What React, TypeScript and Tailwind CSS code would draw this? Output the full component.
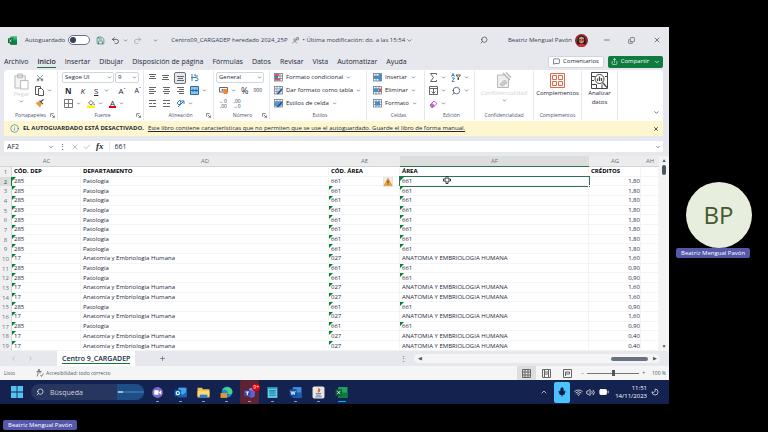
import type { ReactNode } from 'react';
import clsx from 'clsx';
import {
  ArrowDownToLine, Battery, ChevronDown, ChevronLeft, ChevronRight, ChevronUp, Copy as Restore,
  Info, MessageSquare, Mic, Minus, Moon, Plus, Redo2, Save, Scissors, Search, Share, Undo2, Volume2, Wifi, X, Check,
} from 'lucide-react';

const COLUMNS = ['AC', 'AD', 'AE', 'AF', 'AG', 'AH'];
const TABS = ['Archivo', 'Inicio', 'Insertar', 'Dibujar', 'Disposición de página', 'Fórmulas', 'Datos', 'Revisar', 'Vista', 'Automatizar', 'Ayuda'];

type Row = { dep: string; name: string; code: string; area: string; credits: string };

const pat = (credits: string): Row => ({ dep: '285', name: 'Patología', code: '661', area: '661', credits });
const ana = (credits: string): Row => ({
  dep: '17', name: 'Anatomía y Embriología Humana', code: '027', area: 'ANATOMIA Y EMBRIOLOGIA HUMANA', credits,
});

const ROWS: Row[] = [
  pat('1,80'), pat('1,80'), pat('1,80'), pat('1,80'), pat('1,80'), pat('1,80'), pat('1,80'), pat('1,80'),
  ana('1,60'), pat('0,90'), pat('0,90'), ana('1,60'), ana('1,60'), pat('0,90'), ana('1,60'), pat('0,90'),
  ana('0,40'), ana('0,40'),
];

function Caret() {
  return <ChevronDown className="w-[5px] h-[5px] shrink-0 text-gray-600" strokeWidth={3} />;
}

function Group({ label, className, launcher, children }: { label: string; className: string; launcher?: boolean; children: ReactNode }) {
  return (
    <section aria-label={label || 'Análisis'} className={clsx('flex flex-col shrink-0 border-r border-gray-200 my-px', className)}>
      <div className="flex-1">{children}</div>
      <div className="relative h-[9px] leading-[9px] text-[5px] text-center text-gray-600">
        {label}
        {launcher && (
          <svg viewBox="0 0 8 8" className="absolute right-[2px] top-[2px] w-[5px] h-[5px]" fill="none" stroke="#444">
            <path d="M1 6V1h5M3 3l4 4M7 4v3H4" />
          </svg>
        )}
      </div>
    </section>
  );
}

function Line({ className, children }: { className?: string; children: ReactNode }) {
  return <div className={clsx('flex items-center h-[13px]', className)}>{children}</div>;
}

function Tool({ label, children, caret, className }: { label: string; children: ReactNode; caret?: boolean; className?: string }) {
  return (
    <button type="button" aria-label={label} className={clsx('flex items-center gap-[3px] shrink-0', className)}>
      {children}
      {caret && <Caret />}
    </button>
  );
}

function Bars({ d, color = '#666' }: { d: string; color?: string }) {
  return (
    <svg viewBox="0 0 9 9" className="w-[9px] h-[9px]" fill="none" stroke={color}>
      <path d={d} />
    </svg>
  );
}

function GridIcon({ accent, kind }: { accent: string; kind: 'cond' | 'table' | 'style' | 'insert' | 'delete' | 'format' }) {
  return (
    <svg viewBox="0 0 18 18" className="w-[9px] h-[9px]" fill="none" strokeWidth="1.5">
      <rect x="1" y="1" width="16" height="15" fill="#fff" stroke="#6b7280" />
      <path d="M1 6h16M1 11h16M6 1v15M12 1v15" stroke="#6b7280" />
      {kind === 'cond' && <><path d="M2 2h8v4H2zM2 11h10v4H2z" fill="#e8505b" /><path d="M2 6h6v5H2z" fill="#2f7fc1" /></>}
      {kind === 'table' && <path d="M6 6h11v5H6z" fill={accent} />}
      {kind === 'style' && <path d="M2 5h13v9H2z" fill={accent} />}
      {kind === 'insert' && <path d="M1 6h11v5H1zM12 2h5v14h-5z" fill={accent} />}
      {kind === 'delete' && <><path d="M1 5h9v7H1z" fill={accent} /><path d="M11 5l6 7m0-7l-6 7" stroke="#d13438" strokeWidth="2" /></>}
      {kind === 'format' && <path d="M4 5h10v8H4z" fill={accent} />}
      {(kind === 'table' || kind === 'style') && <path d="M7 16l9-10" stroke="#1d4f91" strokeWidth="3" />}
    </svg>
  );
}

function ExcelLogo({ className }: { className: string }) {
  return (
    <svg viewBox="0 0 24 24" className={className}>
      <rect x="6" y="1" width="18" height="22" rx="2" fill="#21a366" />
      <path d="M15 1h7a2 2 0 012 2v4h-9z" fill="#33c481" />
      <path d="M6 12h18v9a2 2 0 01-2 2H8a2 2 0 01-2-2z" fill="#107c41" />
      <rect y="6" width="13" height="13" rx="1.5" fill="#0b6a37" />
      <path d="M3.500 9l6 7.500M9.500 9l-6 7.500" stroke="#fff" strokeWidth="1.800" />
    </svg>
  );
}

function TitleBar() {
  return (
    <header className="flex items-center h-[26px] px-2 text-gray-700">
      <ExcelLogo className="w-[9px] h-[9px]" />
      <label className="flex items-center gap-[3px] ml-2">
        Autoguardado
        <span className="relative flex items-center">
          <input type="checkbox" className="appearance-none w-[22px] h-[10px] rounded-full border border-gray-500 bg-white" />
          <span className="absolute left-[2px] w-[6px] h-[6px] rounded-full bg-gray-700" />
        </span>
      </label>
      <Tool label="Guardar" className="ml-[6px]"><Save className="w-[9px] h-[9px] text-emerald-800" strokeWidth={1.5} /></Tool>
      <Tool label="Deshacer" caret className="ml-[6px]"><Undo2 className="w-[9px] h-[9px]" /></Tool>
      <Tool label="Rehacer" className="ml-[5px] text-gray-400"><Redo2 className="w-[9px] h-[9px]" /></Tool>
      <Tool label="Personalizar" className="ml-[11px]"><Caret /></Tool>
      <h1 className="flex items-center ml-[13px] whitespace-nowrap">
        Centro09_CARGADEP heredado 2024_25P
        <svg viewBox="0 0 12 12" className="w-[7px] h-[7px] mx-1" fill="none" stroke="#555"><circle cx="5" cy="5" r="2" /><path d="M1 11c1-4 6-4 7 0M8 1h3v4H8z" /></svg>
        • Última modificación: do. a las 15:54
        <ChevronDown className="w-[7px] h-[7px] ml-px" />
      </h1>
      <Tool label="Buscar" className="ml-auto"><Search className="w-2 h-2 -scale-x-100" /></Tool>
      <span className="ml-5 whitespace-nowrap">Beatriz Mengual Pavón</span>
      <svg viewBox="0 0 24 24" className="w-[13px] h-[13px] ml-[3px]">
        <circle cx="12" cy="12" r="12" fill="#8b2a2e" />
        <path d="M5 20C3 10 6 3 12 3s9 7 7 17z" fill="#2b1718" />
        <ellipse cx="12" cy="11" rx="5" ry="6" fill="#d9977c" />
        <path d="M7 10h4v3H7zM13 10h4v3h-4z" fill="none" stroke="#3a1717" />
        <path d="M4 21c2-4 14-4 16 0-4 4-12 4-16 0z" fill="#c8323c" />
      </svg>
      <Tool label="Minimizar" className="ml-[15px]"><Minus className="w-2 h-2" /></Tool>
      <Tool label="Restaurar" className="ml-[17px]"><Restore className="w-[7px] h-[7px] -scale-y-100" /></Tool>
      <Tool label="Cerrar" className="ml-[18px]"><X className="w-2 h-2" /></Tool>
    </header>
  );
}

function TabBar() {
  return (
    <nav className="flex items-center h-[17px] pl-1 pr-[6px] text-gray-800">
      <div className="flex gap-[9px] text-[7px]">
        {TABS.map((t) => (
          <a key={t} href="#" className={clsx('whitespace-nowrap leading-[11px]', t === 'Inicio' && 'font-semibold border-b border-[#107c41]')}>{t}</a>
        ))}
      </div>
      <button type="button" className="ml-auto flex items-center justify-center gap-[3px] w-[56px] h-3 rounded-xs border border-gray-300 bg-white whitespace-nowrap">
        <MessageSquare className="w-[7px] h-[7px]" />Comentarios
      </button>
      <button type="button" className="ml-1 flex items-center justify-center gap-[3px] w-[55px] h-3 rounded-xs bg-[#0f7b3f] text-white">
        <Share className="w-[7px] h-[7px]" />Compartir<ChevronDown className="w-[6px] h-[6px] ml-[2px]" strokeWidth={3} />
      </button>
    </nav>
  );
}

function Ribbon() {
  return (
    <div className="flex h-[51px] ml-1 mr-[6px] bg-white rounded-t text-gray-800">
      <Group label="Portapapeles" launcher className="w-[54px]">
        <div className="flex">
          <button type="button" className="flex flex-col items-center w-[31px] pt-[2px] pl-[4px] text-gray-300">
            <svg viewBox="0 0 16 18" className="w-[15px] h-[17px]" fill="#f3f3f3" stroke="#b5b5b5">
              <path d="M1 3h11v13H1zM4 1h5v4H4z" /><path d="M7 8h8v9H7z" fill="#fff" />
            </svg>
            Pegar
            <Caret />
          </button>
          <div>
            <Line><Tool label="Cortar" className="ml-px"><Scissors className="w-2 h-2 -rotate-90" strokeWidth={1.5} /></Tool></Line>
            <Line><Tool label="Copiar" caret>
              <svg viewBox="0 0 9 10" className="w-[9px] h-[10px]" fill="#fff" stroke="#555"><path d="M.5.5h5v8h-5z" /><path d="M3.500 2.500h3l2 2v5h-5z" /></svg>
            </Tool></Line>
            <Line><Tool label="Copiar formato">
              <svg viewBox="0 0 16 16" className="w-[9px] h-[9px]"><path d="M1 7l8 8 3-6-5-5z" fill="#f0973b" /><path d="M8 3l6 6M10 5l5-4" stroke="#444" strokeWidth="2" /></svg>
            </Tool></Line>
          </div>
        </div>
      </Group>

      <Group label="Fuente" launcher className="w-[86px] pl-1">
        <Line>
          <span className="relative flex items-center">
            <select aria-label="Fuente" className="appearance-none w-[52px] h-[11px] pl-[2px] border border-gray-300 rounded-xs"><option>Segoe UI</option></select>
            <span className="absolute right-[2px]"><Caret /></span>
          </span>
          <span className="relative flex items-center ml-px">
            <select aria-label="Tamaño de fuente" className="appearance-none w-[24px] h-[11px] pl-[2px] border border-gray-300 rounded-xs"><option>9</option></select>
            <span className="absolute right-[2px]"><Caret /></span>
          </span>
        </Line>
        <Line className="gap-[9px] pl-[3px] text-[8px]">
          <button type="button" className="font-bold">N</button>
          <button type="button" className="italic">K</button>
          <Tool label="Subrayado" caret><span className="underline mr-[3px]">S</span></Tool>
          <Tool label="Aumentar fuente"><span>A<sup className="text-[5px]">ˆ</sup></span></Tool>
          <Tool label="Reducir fuente"><span className="text-[7px]">A<sup className="text-[5px]">ˇ</sup></span></Tool>
        </Line>
        <Line className="gap-[6px] pl-[2px]">
          <Tool label="Bordes" caret><Bars d="M.5.5h8v8h-8zM.5 4.500h8M4.500.5v8" color="#777" /></Tool>
          <Tool label="Color de relleno" caret>
            <svg viewBox="0 0 16 18" className="w-2 h-[9px]"><path d="M3 8l5-5 5 5-5 4z" fill="#fff" stroke="#444" strokeWidth="1.500" /><path d="M14 8l2 4h-3z" fill="#2f7fc1" /><path d="M0 13h16v5H0z" fill="#fff200" /></svg>
          </Tool>
          <Tool label="Color de fuente" caret><span className="text-[8px] leading-[8px] h-[9px] px-px border-b-2 border-red-600">A</span></Tool>
        </Line>
      </Group>

      <Group label="Alineación" launcher className="w-[70px] pl-[4px]">
        <Line className="gap-[4px]">
          <Tool label="Alinear arriba"><Bars d="M1 1.500h7M2 3.500h5M1 5.500h7" /></Tool>
          <Tool label="Alinear en medio"><Bars d="M1 2.500h7M2 4.500h5M1 6.500h7" /></Tool>
          <Tool label="Alinear abajo" className="w-[12px] h-[12px] justify-center border border-gray-500 rounded-xs bg-gray-200"><Bars d="M1 3.500h7M2 5.500h5M1 7.500h7" /></Tool>
          <Tool label="Ajustar texto"><Bars d="M2 1v7M5 1v2M1 4.500h5q2 0 2 2t-3 1M5 3l3 0" color="#3a7ab5" /></Tool>
        </Line>
        <Line className="gap-[5px]">
          <Tool label="Izquierda"><Bars d="M1 1.500h7M1 3.500h5M1 5.500h7M1 7.500h5" /></Tool>
          <Tool label="Centrar"><Bars d="M1 1.500h7M2 3.500h5M1 5.500h7M2 7.500h5" /></Tool>
          <Tool label="Derecha"><Bars d="M1 1.500h7M3 3.500h5M1 5.500h7M3 7.500h5" /></Tool>
          <Tool label="Combinar" caret>
            <svg viewBox="0 0 9 9" className="w-[9px] h-[9px]" fill="#8cc4ee" stroke="#2c6ca5"><path d="M.5.5h8v8h-8z" /><path d="M1 4.500h7M3 3v3M6 3v3" /></svg>
          </Tool>
        </Line>
        <Line className="gap-[5px]">
          <Tool label="Reducir sangría"><Bars d="M1 1.500h7M5 4.500h3M1 7.500h7M4 4.500H1" /></Tool>
          <Tool label="Aumentar sangría"><Bars d="M1 1.500h7M5 4.500h3M1 7.500h7M1 4.500h3" /></Tool>
          <Tool label="Orientación" caret><Bars d="M2 8L8 2M8 5V2H5M1 4l3-3 1 3-2 2z" color="#3a7ab5" /></Tool>
        </Line>
      </Group>

      <Group label="Número" launcher className="w-[56px] pl-[2px]">
        <Line>
          <span className="relative flex items-center">
            <select aria-label="Formato de número" className="appearance-none w-[48px] h-[11px] pl-[2px] border border-gray-300 rounded-xs"><option>General</option></select>
            <span className="absolute right-[2px]"><Caret /></span>
          </span>
        </Line>
        <Line className="gap-[5px] pl-[3px]">
          <Tool label="Moneda" caret>
            <svg viewBox="0 0 18 14" className="w-[9px] h-[7px]"><path d="M1 1h16v9H1z" fill="#fff" stroke="#666" strokeWidth="2" /><path d="M9 4h8v10H9z" fill="#ef8b2c" /><circle cx="7" cy="6" r="2" fill="#666" /></svg>
          </Tool>
          <button type="button" className="text-[9px]">%</button>
          <button type="button" className="text-[5px]">000</button>
        </Line>
        <Line className="gap-[6px] pl-[3px] text-[5px] leading-[5px] text-gray-700">
          <button type="button" className="text-right"><span className="text-sky-700">←</span>0<br />,00</button>
          <button type="button" className="text-right">,00<br /><span className="text-sky-700">→</span>0</button>
        </Line>
      </Group>

      <Group label="Estilos" className="w-[97px] pl-[4px]">
        <Line><Tool label="Formato condicional" caret><GridIcon accent="#e8505b" kind="cond" />Formato condicional</Tool></Line>
        <Line><Tool label="Dar formato como tabla" caret><GridIcon accent="#a9d4f5" kind="table" />Dar formato como tabla</Tool></Line>
        <Line><Tool label="Estilos de celda" caret><GridIcon accent="#4a9ad8" kind="style" />Estilos de celda</Tool></Line>
      </Group>

      <Group label="Celdas" className="w-[58px] pl-[6px]">
        <Line><Tool label="Insertar celdas"><GridIcon accent="#3d8fd1" kind="insert" />Insertar</Tool><span className="ml-auto mr-[8px]"><Caret /></span></Line>
        <Line><Tool label="Eliminar celdas"><GridIcon accent="#3d8fd1" kind="delete" />Eliminar</Tool><span className="ml-auto mr-[8px]"><Caret /></span></Line>
        <Line><Tool label="Formato de celdas" caret><GridIcon accent="#3d8fd1" kind="format" />Formato</Tool></Line>
      </Group>

      <Group label="Edición" className="w-[50px] pl-[4px]">
        <Line className="gap-[5px]">
          <Tool label="Suma" caret><Bars d="M7.500 2V.5h-6l3 4-3 4h6V7" /></Tool>
          <Tool label="Ordenar y filtrar" caret>
            <svg viewBox="0 0 20 18" className="w-[10px] h-[9px]" fill="none" strokeWidth="1.800"><path d="M1 7l3-6 3 6M2 5h4M2 10h5l-5 7h5" stroke="#2f7fc1" /><path d="M10 4h9l-4 5v5l-1-1V9z" stroke="#444" /></svg>
          </Tool>
        </Line>
        <Line className="gap-[5px]">
          <Tool label="Rellenar" caret><Bars d="M.5.5h8v8h-8zM.5 2.500h8M4.500 3v4M2.500 5.500l2 2 2-2" /></Tool>
          <Tool label="Buscar y seleccionar" caret><Search className="w-[10px] h-[10px] -scale-x-100" strokeWidth={1.5} /></Tool>
        </Line>
        <Line>
          <Tool label="Borrar" caret>
            <svg viewBox="0 0 18 16" className="w-[9px] h-2" strokeWidth="1.600"><path d="M2 10l8-8 6 5-8 8H5z" fill="#fff" stroke="#a33bb5" /><path d="M2 10l4-4 6 5-4 4H5z" fill="#c65fd3" /></svg>
          </Tool>
        </Line>
      </Group>

      <Group label="Confidencialidad" className="w-[59px]">
        <button type="button" disabled className="flex flex-col items-center w-full pt-px text-gray-300">
          <svg viewBox="0 0 32 34" className="w-4 h-[17px]" fill="none" stroke="#b8b8b8" strokeWidth="2">
            <path d="M3 6h14l8 8v17H3z" fill="#eee" /><path d="M8 25l9-9 5 5-9 7z" fill="#ccc" /><path d="M14 2l14 14M20 1l10 10" strokeWidth="3" />
          </svg>
          Confidencialidad
          <Caret />
        </button>
      </Group>

      <Group label="Complementos" className="w-[48px]">
        <button type="button" className="flex flex-col items-center w-full pt-[2px] gap-px">
          <svg viewBox="0 0 15 15" className="w-[15px] h-[15px]" fill="#fff" stroke="#e0694a">
            <path d="M.5.5h14v14H.5z" /><path d="M2.500 2.500h4v4h-4zM8.500 2.500h4v4h-4zM2.500 8.500h4v4h-4zM8.500 8.500h4v4h-4z" />
          </svg>
          Complementos
        </button>
      </Group>

      <Group label="" className="w-[36px]">
        <button type="button" className="flex flex-col items-center w-full pt-px">
          <svg viewBox="0 0 34 34" className="w-[17px] h-[17px]" fill="none" stroke="#444" strokeWidth="2">
            <path d="M1 1h32v32H1zM1 9h8M1 17h5M1 25h10M28 9h5M11 25v8M22 25v8" />
            <circle cx="17" cy="14" r="9" fill="#fff" /><path d="M13 18v-5M17 18V9M21 18v-6M23 21l9 10" strokeWidth="2.500" />
          </svg>
          <span>Analizar<br />datos</span>
        </button>
      </Group>
      <Tool label="Contraer la cinta" className="ml-auto mr-[3px] mt-auto mb-[5px]"><ChevronDown className="w-[7px] h-[7px]" /></Tool>
    </div>
  );
}

function Mark() {
  return <span className="absolute left-0 top-0 border-t-[4px] border-r-[4px] border-t-green-700 border-r-transparent" />;
}

const cell = 'relative p-0 pl-[2px] border-r border-b border-gray-100 whitespace-nowrap';

function Sheet() {
  return (
    <div className="flex h-[195px] bg-white">
      <table className="flex-1 h-full table-fixed border-separate border-spacing-0 leading-[8px] text-gray-800">
        <colgroup>
          <col className="w-[12px]" />
          <col className="w-[69px]" />
          <col />
          <col className="w-[71px]" />
          <col className="w-[189px]" />
          <col className="w-[52px]" />
          <col className="w-[18px]" />
        </colgroup>
        <thead>
          <tr className="h-[11px] bg-[#ececec] text-gray-500">
            <th className="p-0 border-b border-gray-300" />
            {COLUMNS.map((c) => (
              <th
                key={c}
                scope="col"
                className={clsx('p-0 font-normal border-b overflow-hidden', c === 'AF' ? 'bg-[#dcdedd] border-[#2f6f55]' : 'border-gray-300')}
              >
                {c}
              </th>
            ))}
          </tr>
        </thead>
        <tbody>
          <tr className="font-bold text-black">
            <th scope="row" className="p-0 font-normal text-gray-500 bg-[#f0f0f0] border-r border-gray-300">1</th>
            <td className={cell}>CÓD. DEP</td>
            <td className={cell}>DEPARTAMENTO</td>
            <td className={cell}>CÓD. ÁREA</td>
            <td className={cell}>ÁREA</td>
            <td className={cell}>CRÉDITOS</td>
            <td className={cell} />
          </tr>
          {ROWS.map((r, i) => (
            <tr key={i}>
              <th scope="row" className={clsx('p-0 font-normal border-r', i === 0 ? 'bg-[#dcdedd] text-green-800 border-green-700' : 'bg-[#f0f0f0] text-gray-500 border-gray-300')}>{i + 2}</th>
              <td className={cell}><Mark />{r.dep}</td>
              <td className={cell}>{r.name}</td>
              <td className={cell}>
                {i > 0 && <Mark />}
                {r.code}
                {i === 0 && (
                  <svg viewBox="0 0 20 20" className="absolute right-[6px] top-0 w-[10px] h-[10px]">
                    <path d="M.5.5h19v19H.5z" fill="#f7efe4" stroke="#cfcfcf" />
                    <path d="M10 2l8 15H2z" fill="#f0a33a" stroke="#d98a20" /><path d="M10 7v5M10 13v2" stroke="#333" strokeWidth="2" />
                  </svg>
                )}
              </td>
              <td className={clsx(cell, i === 0 && 'outline outline-[#2f6f55]')}>
                {r.area === '661' && <Mark />}
                {r.area}
                {i === 0 && (
                  <svg viewBox="0 0 16 16" className="absolute left-[43px] -top-px w-2 h-2" fill="#fff" stroke="#333" strokeWidth="2">
                    <path d="M6 1h4v5h5v4h-5v5H6v-5H1V6h5z" />
                  </svg>
                )}
              </td>
              <td className={clsx(cell, 'text-right')}>{r.credits}</td>
              <td className={cell} />
            </tr>
          ))}
        </tbody>
      </table>
      <div className="flex flex-col items-center w-[10px] bg-[#f3f3f3] pt-px pb-px text-[5px] leading-[7px] text-gray-600">
        <span>▲</span>
        <span className="w-1 h-[10px] mt-px rounded-full bg-gray-600" />
        <span className="mt-auto">▼</span>
      </div>
    </div>
  );
}

function StatusBar() {
  return (
    <footer className="flex items-center h-[14px] pl-1 pr-[3px] bg-[#f5f5f6] text-[5px] text-gray-600">
      <span>Listo</span>
      <button type="button" className="flex items-center gap-[2px] ml-[21px]">
        <svg viewBox="0 0 16 16" className="w-2 h-2" fill="none" stroke="#555" strokeWidth="1.500"><circle cx="6" cy="2" r="1.500" /><path d="M1 5h10M4 5v5l-2 5M8 5v4M9 12l2 3 4-6" /></svg>
        Accesibilidad: todo correcto
      </button>
      <div className="flex items-center ml-auto h-full">
        <Tool label="Normal" className="w-[19px] h-full justify-center bg-[#dedede]"><Bars d="M.5.5h8v8h-8zM.5 3h8M.5 6h8M3 .5v8M6 .5v8" /></Tool>
        <Tool label="Diseño de página" className="w-[21px] justify-center"><Bars d="M.5.5h8v8h-8zM2.500 1v7M6.500 1v7M3 3h3M3 5h3" /></Tool>
        <Tool label="Salto de página" className="w-[21px] justify-center"><Bars d="M.5.5h8v8h-8zM2.500 7V3h4v2h-4" /></Tool>
      </div>
      <span className="ml-[3px]">−</span>
      <input
        type="range"
        aria-label="Zoom"
        defaultValue={50}
        className="appearance-none w-[52px] h-[6px] mx-[3px] bg-[linear-gradient(#777,#777)] bg-[length:100%_1px] bg-center bg-no-repeat [&::-webkit-slider-thumb]:appearance-none [&::-webkit-slider-thumb]:w-[3px] [&::-webkit-slider-thumb]:h-[6px] [&::-webkit-slider-thumb]:bg-gray-600"
      />
      <span>+</span>
      <span className="ml-[7px]">100 %</span>
    </footer>
  );
}

function TaskIcon({ label, children, active }: { label: string; children: ReactNode; active?: boolean }) {
  return (
    <button type="button" aria-label={label} className="flex flex-col items-center justify-end w-[19px] h-full">
      <svg viewBox="0 0 24 24" className="w-[13px] h-[13px]">{children}</svg>
      <span className={clsx('h-px my-[2px] rounded', active ? 'w-2 bg-sky-400' : 'w-[3px] bg-gray-400')} />
    </button>
  );
}

function Taskbar() {
  return (
    <div className="flex items-center h-6 pl-[11px] pr-[10px] bg-[#14224f] text-white">
      <button type="button" aria-label="Inicio">
        <svg viewBox="0 0 12 12" className="w-3 h-3" fill="#55c2f5"><path d="M0 0h5.600v5.600H0zM6.400 0H12v5.600H6.400zM0 6.400h5.600V12H0zM6.400 6.400H12V12H6.400z" /></svg>
      </button>
      <label className="flex items-center w-[113px] h-4 ml-2 pl-[5px] rounded-full bg-[#27365f]">
        <Search className="w-2 h-2 -scale-x-100" />
        <input type="search" placeholder="Búsqueda" className="w-[58px] ml-[6px] text-[7px] placeholder:text-gray-300" aria-label="Búsqueda" />
        <svg viewBox="0 0 27 16" className="w-[27px] h-4 ml-auto rounded-r-full" preserveAspectRatio="none">
          <path d="M0 0h27v16H0z" fill="#1f4d86" /><path d="M0 8h27" stroke="#4d90c4" /><path d="M1 8h5" stroke="#fff" />
        </svg>
      </label>
      <div className="flex gap-[4px] h-full ml-1">
        <TaskIcon label="Chat"><circle cx="12" cy="12" r="10" fill="#7b6cc9" /><path d="M6 8h8v8H6zM15 11l4-3v8l-4-3z" fill="#fff" /></TaskIcon>
        <TaskIcon label="Outlook"><path d="M8 3h15v17H8z" fill="#42a5ea" /><path d="M8 11l8 5 7-5v10H8z" fill="#1565b8" /><path d="M1 7h12v12H1z" fill="#0f5fb5" /><circle cx="7" cy="13" r="3" fill="none" stroke="#fff" strokeWidth="2" /></TaskIcon>
        <TaskIcon label="Explorador"><path d="M1 3h8l2 3h12v15H1z" fill="#f5c04a" /><path d="M1 9h22v10H1z" fill="#fbd975" /><path d="M5 16h14v6H5z" fill="#2c7dc7" /></TaskIcon>
        <TaskIcon label="Edge"><circle cx="13" cy="11" r="10" fill="#1b8ad3" /><path d="M4 8c4-9 19-7 19 3 0 5-8 5-9 2 2-5-6-8-10-5z" fill="#4cd08a" /><path d="M1 13h12v9H1z" fill="#e4952c" /></TaskIcon>
        <div className="relative bg-[#5b2334] rounded-xs">
          <TaskIcon label="Teams"><circle cx="15" cy="7" r="4" fill="#7b83eb" /><path d="M8 9h14v8c0 6-12 6-13 0z" fill="#5b62c9" /><path d="M2 8h12v11H2z" fill="#4248a8" /><path d="M5 11h6M8 11v6" stroke="#fff" strokeWidth="2" /></TaskIcon>
          <span className="absolute -right-px top-[4px] h-[7px] px-px rounded-full bg-red-600 text-[5px] leading-[7px]">9+</span>
        </div>
        <TaskIcon label="Bloc de notas"><path d="M3 2h18v20H3z" fill="#5fd0e8" /><path d="M3 2h18v3H3z" fill="#2b8cab" /><path d="M6 9h12M6 13h12M6 17h12" stroke="#1b6f95" strokeWidth="2" /></TaskIcon>
        <TaskIcon label="Word"><path d="M7 2h16v20H7z" fill="#3f8fe0" /><path d="M7 12h16v10H7z" fill="#1c5bb5" /><path d="M1 6h13v13H1z" fill="#174a9c" /><path d="M3.500 9l2 7 2-6 2 6 2-7" fill="none" stroke="#fff" strokeWidth="1.500" /></TaskIcon>
        <TaskIcon label="Java"><rect x="1" y="1" width="22" height="22" rx="3" fill="#e8e6e2" /><path d="M12 4c3 3-3 4 0 8M15 6c-2 2-2 3-1 5" fill="none" stroke="#d9622b" strokeWidth="2" /><path d="M7 14h10M8 17h8M6 20h12" stroke="#4a6d94" strokeWidth="1.500" /></TaskIcon>
        <TaskIcon label="Excel" active><path d="M6 2h17v20H6z" fill="#21a366" /><path d="M6 12h17v10H6z" fill="#107c41" /><path d="M1 6h12v12H1z" fill="#0b5f31" /><path d="M4 9l6 6M10 9l-6 6" stroke="#fff" strokeWidth="1.500" /></TaskIcon>
      </div>
      <Tool label="Iconos ocultos" className="ml-auto"><ChevronUp className="w-2 h-2" /></Tool>
      <Tool label="Micrófono" className="w-4 h-[21px] ml-[6px] justify-center rounded-xs bg-[#4cc2ff] text-[#10204a]"><Mic className="w-[10px] h-[10px]" fill="#10204a" /></Tool>
      <Wifi className="w-[9px] h-[9px] ml-[4px]" />
      <Volume2 className="w-[9px] h-[9px] ml-[3px]" />
      <Battery className="w-[10px] h-[10px] ml-[4px]" fill="#fff" />
      <time className="ml-[6px] text-right leading-[8px]">11:51<br />14/11/2023</time>
      <Moon className="w-2 h-2 ml-[4px] -scale-x-100" />
    </div>
  );
}

function NameTag() {
  return <span className="px-[5px] h-[10px] leading-[10px] rounded-xs bg-[#5558a8] text-white whitespace-nowrap">Beatriz Mengual Pavón</span>;
}

export default function App() {
  return (
    <div className="min-h-screen bg-black pt-[27px] font-['Open_Sans',sans-serif] text-[6px] leading-[9px]">
      <div className="flex">
        <main className="flex-1 min-w-0 bg-[#e6e8ed]">
          <TitleBar />
          <TabBar />
          <Ribbon />
          <div className="flex items-center h-[15px] ml-1 mr-[6px] pl-[6px] pr-[4px] bg-[#fdf6cf] text-gray-800 whitespace-nowrap">
            <Info className="w-[9px] h-[9px] text-sky-700" strokeWidth={1.5} />
            <strong className="ml-[4px]">EL AUTOGUARDADO ESTÁ DESACTIVADO.</strong>
            <a href="#" className="ml-1 underline">Este libro contiene características que no permiten que se use el autoguardado. Guarde el libro de forma manual.</a>
            <Tool label="Cerrar aviso" className="ml-auto"><X className="w-[6px] h-[6px]" strokeWidth={3} /></Tool>
          </div>
          <div className="flex items-center h-[11px] ml-1 mr-[6px] mt-[5px] mb-1 text-[7px] bg-white text-gray-800">
            <input aria-label="Cuadro de nombres" defaultValue="AF2" className="w-[44px] pl-[3px]" />
            <ChevronDown className="w-[6px] h-[6px]" />
            <span className="ml-[5px]">⋮</span>
            <Tool label="Cancelar" className="ml-[5px] text-gray-400"><X className="w-2 h-2" /></Tool>
            <Tool label="Introducir" className="ml-[4px] text-gray-400"><Check className="w-2 h-2" /></Tool>
            <button type="button" className="ml-[5px] font-['Liberation_Serif',serif] italic font-bold text-[9px]">fx</button>
            <input aria-label="Barra de fórmulas" defaultValue="661" className="flex-1 ml-[5px] pl-[5px] border-l border-gray-200" />
            <ChevronDown className="w-[6px] h-[6px] mr-[2px]" />
          </div>
          <Sheet />
          <div className="flex items-center h-[15px] pl-[10px] pr-[9px] text-gray-600">
            <ChevronLeft className="w-[7px] h-[7px] text-gray-400" />
            <ChevronRight className="w-[7px] h-[7px] ml-[10px] text-gray-400" />
            <button type="button" className="h-full ml-[23px] px-[5px] bg-white text-gray-800 text-[7px] font-semibold"><span className="block border-b border-[#107c41]">Centro 9_CARGADEP</span></button>
            <Tool label="Hoja nueva" className="ml-[24px]"><Plus className="w-[7px] h-[7px]" /></Tool>
            <span className="ml-auto text-[7px]">⋮</span>
            <div className="flex items-center w-[246px] h-[9px] ml-[7px] pl-[4px] rounded-full bg-[#f5f5f6] text-[5px]">
              ◀
              <span className="ml-auto mr-[5px] w-[37px] h-1 rounded-full bg-gray-500" />
              <span className="mr-[3px]">▶</span>
            </div>
          </div>
          <StatusBar />
          <Taskbar />
        </main>
        <aside className="flex flex-col items-center justify-center w-[99px] pt-2 shrink-0">
          <div className="flex items-center justify-center w-[66px] h-[66px] rounded-full bg-[#e7eedd] text-[#44592f] text-2xl">BP</div>
          <div className="flex self-start pl-[7px]"><NameTag /></div>
        </aside>
      </div>
      <div className="flex pt-4 pl-[3px]">
        <NameTag />
      </div>
    </div>
  );
}
